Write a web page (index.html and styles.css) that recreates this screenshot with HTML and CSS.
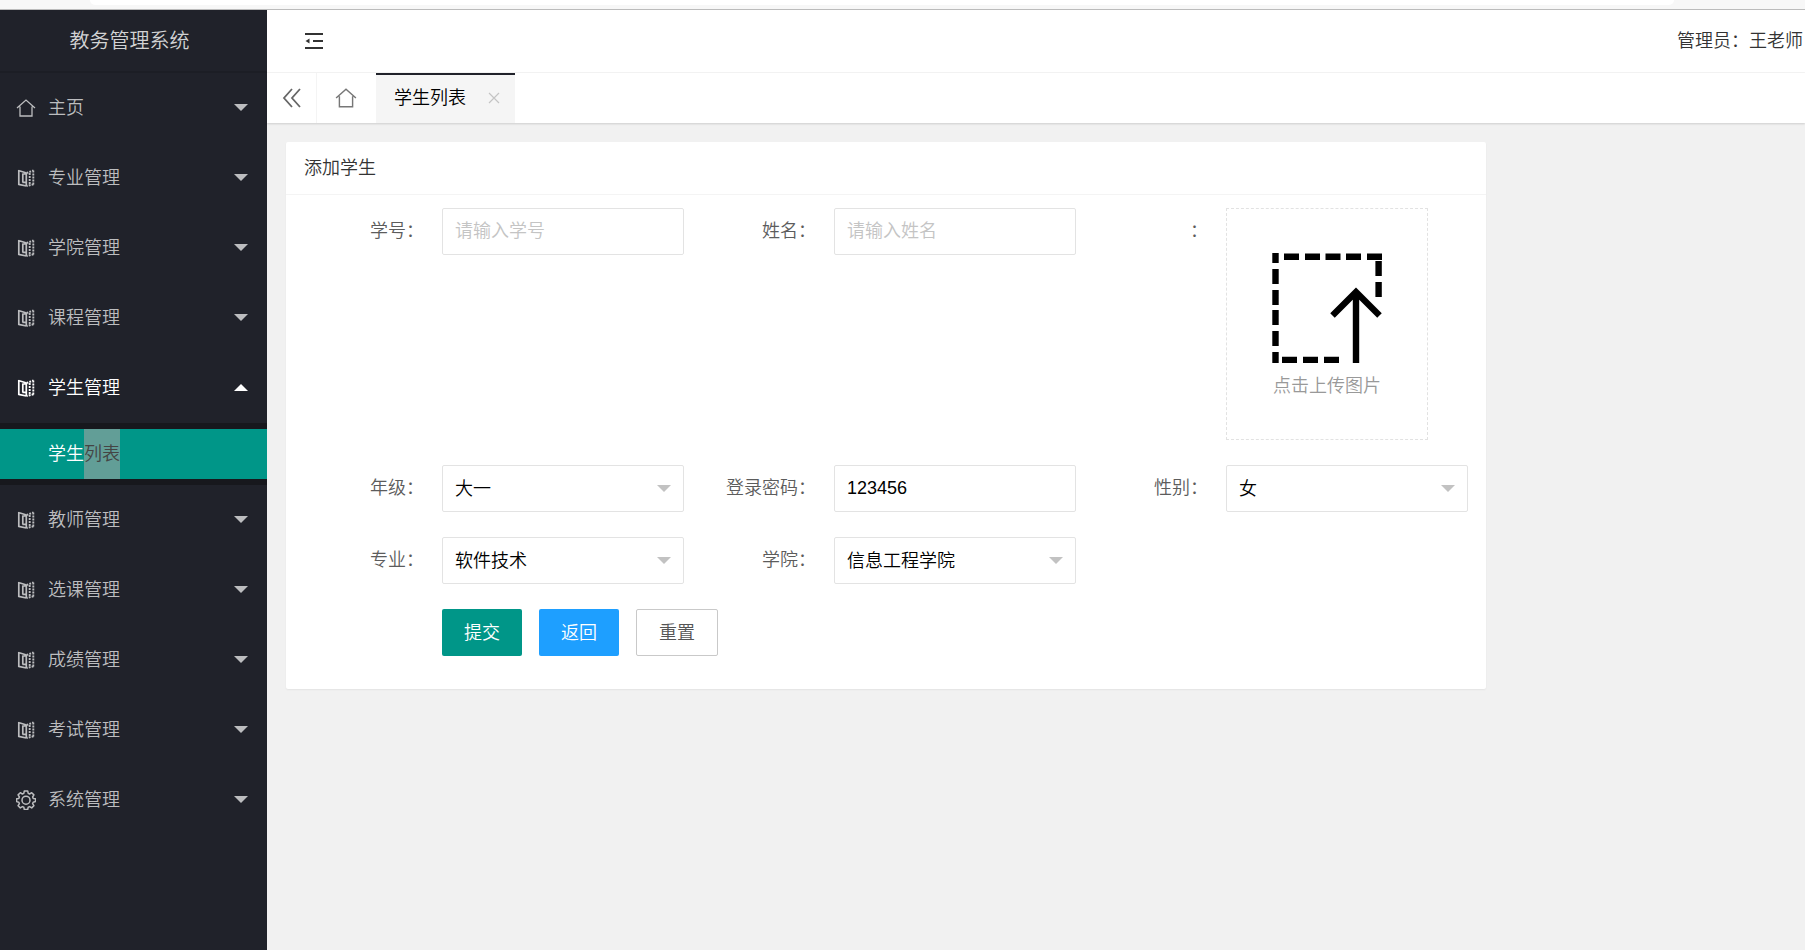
FILE: index.html
```html
<!DOCTYPE html>
<html lang="zh-CN">
<head>
<meta charset="utf-8">
<title>教务管理系统</title>
<link rel="stylesheet" href="styles.css">
</head>
<body>
<svg class="sprite" aria-hidden="true">
  <symbol id="home" viewBox="0 0 20 20"><path d="M1 10 10 2l9 8M4 8.500v9.500h12V8.500" fill="none" stroke="currentColor" stroke-width="1.300"/></symbol>
  <symbol id="book" viewBox="0 0 20 20"><path d="M2.800 2v15M2.500 2.500l8 2.500M2.500 16.300l8 1.700M6.800 5.500v9M6.500 6h4M6.500 14.300h4M10.300 5v13" fill="none" stroke="currentColor" stroke-width="1.700"/><path d="M10.500 5l7-2.500M17.300 2.500v14M17.500 16.300l-7 1.700M13.700 5v12" fill="none" stroke="currentColor" stroke-width="1.900" stroke-dasharray="1.900 1.100"/></symbol>
  <symbol id="gear" viewBox="0 0 20 20"><path d="M8.300 1h3.400l.5 2.400 1.400.6 2.100-1.300 2.200 2.200-1.300 2.100.6 1.400 2.300.4v2.800l-2.300.6-.6 1.400 1.300 2.100-2.200 2.200-2.100-1.300-1.400.6-.5 2.300H8.300l-.5-2.300-1.400-.6-2.100 1.300-2.200-2.200 1.300-2.100-.6-1.400L.6 11.600V8.800l2.200-.4.6-1.400-1.300-2.100 2.200-2.200L6.400 4l1.400-.6z" fill="none" stroke="currentColor" stroke-width="1.500" stroke-linejoin="round"/><circle cx="10" cy="10.200" r="4" fill="none" stroke="currentColor" stroke-width="1.500"/></symbol>
</svg>
<div class="browser-edge"><div class="address-bar"></div></div>
<div class="layout">
  <aside class="sidebar">
    <div class="logo">教务管理系统</div>
    <nav class="menu">
      <a class="item" href="#"><svg class="icon"><use href="#home"/></svg><span>主页</span><i class="caret"></i></a>
      <a class="item" href="#"><svg class="icon"><use href="#book"/></svg><span>专业管理</span><i class="caret"></i></a>
      <a class="item" href="#"><svg class="icon"><use href="#book"/></svg><span>学院管理</span><i class="caret"></i></a>
      <a class="item" href="#"><svg class="icon"><use href="#book"/></svg><span>课程管理</span><i class="caret"></i></a>
      <a class="item open" href="#"><svg class="icon"><use href="#book"/></svg><span>学生管理</span><i class="caret"></i></a>
      <div class="submenu"><a class="subitem" href="#">学生<span class="picked">列表</span></a></div>
      <a class="item" href="#"><svg class="icon"><use href="#book"/></svg><span>教师管理</span><i class="caret"></i></a>
      <a class="item" href="#"><svg class="icon"><use href="#book"/></svg><span>选课管理</span><i class="caret"></i></a>
      <a class="item" href="#"><svg class="icon"><use href="#book"/></svg><span>成绩管理</span><i class="caret"></i></a>
      <a class="item" href="#"><svg class="icon"><use href="#book"/></svg><span>考试管理</span><i class="caret"></i></a>
      <a class="item" href="#"><svg class="icon"><use href="#gear"/></svg><span>系统管理</span><i class="caret"></i></a>
    </nav>
  </aside>
  <div class="main">
    <header class="header">
      <button class="plain" type="button" aria-label="收起菜单">
        <svg width="20" height="20" viewBox="0 0 20 20"><path d="M1 3h18M9 10h10M1 17h18" stroke="#333" stroke-width="2"/><path d="M1.500 10l4-2.500v5z" fill="#333"/></svg>
      </button>
      <span>管理员：王老师</span>
    </header>
    <div class="tabs">
      <button class="plain scroll" type="button" aria-label="向左滚动">
        <svg width="20" height="20" viewBox="0 0 20 20"><path d="M10 1 2 10l8 9M18 1l-8 9 8 9" fill="none" stroke="#666" stroke-width="1.800"/></svg>
      </button>
      <a class="tab-home" href="#" aria-label="主页"><svg width="22" height="22"><use href="#home"/></svg></a>
      <div class="tab">
        <a href="#">学生列表</a>
        <button class="plain" type="button" aria-label="关闭">
          <svg width="12" height="12" viewBox="0 0 12 12"><path d="M1 1l10 10M11 1 1 11" stroke="#c4c4c4" stroke-width="1.200"/></svg>
        </button>
      </div>
    </div>
    <main class="content">
      <section class="card">
        <h1 class="card-title">添加学生</h1>
        <form class="form">
          <div class="field"><label for="sid">学号：</label><input class="control" id="sid" type="text" placeholder="请输入学号"></div>
          <div class="field"><label for="name">姓名：</label><input class="control" id="name" type="text" placeholder="请输入姓名"></div>
          <div class="field"><label for="photo">：</label>
            <button class="upload" id="photo" type="button">
              <svg width="110" height="110" viewBox="0 0 110 110"><g fill="none" stroke="#000" stroke-width="6.400"><path d="M12 3.800h15M33 3.800h15M53.500 3.800h15M74 3.800h15M95 3.800h15M3.500 0v10M3.500 16v15M3.500 37v15M3.500 57v15M3.500 78v15M3.500 99v11M10 107h15M31 107h15M52 107h15M106.600 8v15M106.600 29v15M84 110V38M60.500 62.500 84 39l23.500 23.500"/></g></svg>
              <span>点击上传图片</span>
            </button>
          </div>
          <div class="field"><label for="grade">年级：</label><div class="pick"><select class="control" id="grade"><option>大一</option></select></div></div>
          <div class="field"><label for="pwd">登录密码：</label><input class="control" id="pwd" type="text" value="123456"></div>
          <div class="field"><label for="sex">性别：</label><div class="pick"><select class="control" id="sex"><option>女</option></select></div></div>
          <div class="field"><label for="major">专业：</label><div class="pick"><select class="control" id="major"><option>软件技术</option></select></div></div>
          <div class="field"><label for="college">学院：</label><div class="pick"><select class="control" id="college"><option>信息工程学院</option></select></div></div>
          <div class="actions">
            <button class="btn submit" type="button">提交</button>
            <button class="btn back" type="button">返回</button>
            <button class="btn reset" type="reset">重置</button>
          </div>
        </form>
      </section>
    </main>
  </div>
</div>
</body>
</html>
```
FILE: styles.css
```css
* { box-sizing: border-box; }

body {
  margin: 0;
  min-height: 100vh;
  display: flex;
  flex-direction: column;
  background: #f1f1f1;
  color: #333;
  font: 350 18px/24px "Liberation Sans", "Noto Sans CJK SC", sans-serif;
}

a { color: inherit; text-decoration: none; }
button, input, select { font: inherit; }
svg { display: block; }
.sprite { position: absolute; width: 0; height: 0; }
.plain { padding: 0; border: 0; background: none; }

.browser-edge {
  height: 10px;
  padding: 0 131px 0 90px;
  border-bottom: 1px solid #bbb;
  background: #f7f7f7;
}
.address-bar { height: 5px; border-radius: 0 0 14px 14px; background: #fff; }

.layout { flex: 1; display: flex; }

/* Sidebar */
.sidebar { flex: none; width: 267px; background: #20222a; color: #bcbdbf; }
.logo {
  height: 63px;
  padding-right: 8px;
  border-bottom: 2px solid #1c1e25;
  color: #d2d3d4;
  font-size: 20px;
  line-height: 62px;
  text-align: center;
}
.item { display: flex; align-items: center; height: 70px; padding: 0 19px 0 16px; }
.icon { width: 20px; height: 20px; margin-right: 12px; }
.caret {
  margin: 0 0 2px auto;
  border: 7px solid transparent;
  border-top-color: currentColor;
  border-bottom: 0;
}
.open { color: #fff; }
.open .caret { border-top: 0; border-bottom: 7px solid currentColor; }
.submenu { padding: 6px 0; background: #17181d; }
.subitem { display: flex; padding-left: 48px; background: #009688; color: #fff; line-height: 50px; }
.picked { background: #629e97; color: #444; }

/* Header and tabs */
.main { flex: 1; min-width: 0; }
.header {
  display: flex;
  align-items: center;
  justify-content: space-between;
  height: 63px;
  padding: 0 2px 0 37px;
  border-bottom: 1px solid #f4f4f4;
  background: #fff;
}
.tabs {
  display: flex;
  height: 50px;
  background: #fff;
  box-shadow: 0 1px 2px rgba(0, 0, 0, .15);
}
.scroll { width: 50px; padding-left: 15px; border-right: 1px solid #f4f4f4; }
.tab-home { display: flex; align-items: center; padding: 0 19px 0 18px; color: #777; }
.tab {
  display: flex;
  align-items: center;
  justify-content: space-between;
  width: 139px;
  padding: 0 15px 2px 18px;
  border-top: 2px solid #20222a;
  background: #f5f5f5;
  color: #000;
}

/* Form card */
.content { padding: 19px; }
.card {
  width: 80%;
  border-radius: 2px;
  background: #fff;
  box-shadow: 0 1px 2px rgba(0, 0, 0, .06);
}
.card-title {
  margin: 0;
  padding: 0 18px;
  border-bottom: 1px solid #f4f4f4;
  font-size: 18px;
  font-weight: 350;
  line-height: 52px;
}
.form {
  display: grid;
  grid-template-columns: repeat(3, 1fr);
  row-gap: 25px;
  padding: 13px 18px 33px 6px;
}
.field { display: flex; align-items: flex-start; }
.field label {
  flex: none;
  width: 150px;
  padding-right: 18px;
  color: #5c5c5c;
  line-height: 46px;
  text-align: right;
}
.control {
  flex: 1;
  width: 100%;
  min-width: 0;
  height: 47px;
  padding: 0 12px;
  border: 1px solid #e3e3e3;
  border-radius: 2px;
  background: #fff;
  color: #000;
}
.control::placeholder { color: #c4c4c4; }
.pick { position: relative; flex: 1; }
.pick::after {
  content: "";
  position: absolute;
  top: 20px;
  right: 13px;
  border: 7px solid transparent;
  border-top-color: #c2c2c2;
  border-bottom: 0;
  pointer-events: none;
}
select.control { display: block; appearance: none; }
.upload {
  display: flex;
  flex-direction: column;
  align-items: center;
  gap: 11px;
  padding: 44px 45px 41px;
  border: 1px dashed #e2e2e2;
  background: #fff;
  color: #999;
  white-space: nowrap;
}

.actions { grid-column: 1 / -1; display: flex; gap: 17px; padding-left: 150px; }
.btn {
  height: 47px;
  padding: 0 22px;
  border: 0;
  border-radius: 2px;
  color: #fff;
}
.submit { background: #009688; }
.back { background: #1e9fff; }
.reset { border: 1px solid #c9c9c9; background: #fff; color: #555; }
```
